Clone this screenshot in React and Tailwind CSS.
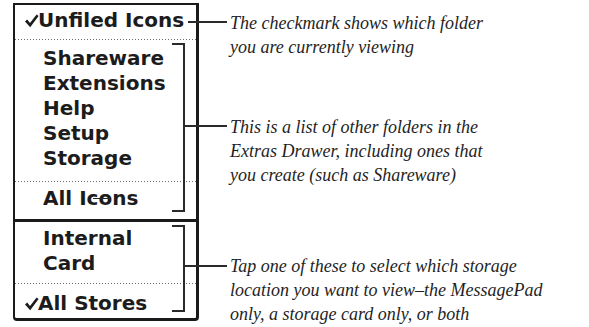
import React from "react";

const menuFont = { fontFamily: '"DejaVu Sans", "Noto Sans", sans-serif' };
const capFont = { fontFamily: '"Liberation Serif", "Times New Roman", serif' };

function Check() {
  return (
    <svg width="14" height="14" viewBox="0 0 14 14" className="shrink-0">
      <polygon points="0,7.5 2.2,5.5 5,9 11.6,0.5 13.6,2 5.2,13.2" fill="#1c1c1c" />
    </svg>
  );
}

function Dots() {
  return <div className="h-px w-full bg-[repeating-linear-gradient(to_right,#6b6b6b_0px,#6b6b6b_1px,transparent_1px,transparent_3px)]" />;
}

function Item({ children }) {
  return <div className="h-[25px] leading-[25px] pl-[28px] whitespace-nowrap">{children}</div>;
}

function CheckItem({ children }) {
  return (
    <div className="h-[25px] leading-[25px] pl-[10px] flex items-center whitespace-nowrap">
      <Check />
      <span className="ml-[-1px]">{children}</span>
    </div>
  );
}

export default function App() {
  return (
    <div className="relative w-[589px] h-[327px] bg-white overflow-hidden flex text-[#1c1c1c]">
      {/* menu */}
      <div
        className="ml-[13px] mt-[3px] w-[186px] self-start border-l-2 border-t-2 border-r-[3px] border-b-[3px] border-[#1a1a1a] rounded-b-[4px] flex flex-col text-[20px] font-bold"
        style={menuFont}
      >
        <div className="pt-[3px]">
          <CheckItem>Unfiled Icons</CheckItem>
        </div>
        <div className="mt-[6px]"><Dots /></div>
        <div className="mt-[6px] flex flex-col">
          <Item>Shareware</Item>
          <Item>Extensions</Item>
          <Item>Help</Item>
          <Item>Setup</Item>
          <Item>Storage</Item>
        </div>
        <div className="mt-[10px]"><Dots /></div>
        <div className="mt-[4px]">
          <Item>All Icons</Item>
        </div>
        <div className="mt-[8px] h-[3px] bg-[#1a1a1a]" />
        <div className="mt-[4px] flex flex-col">
          <Item>Internal</Item>
          <Item>Card</Item>
        </div>
        <div className="mt-[7px]"><Dots /></div>
        <div className="mt-[7px] pb-[2px]">
          <CheckItem>All Stores</CheckItem>
        </div>
      </div>

      {/* captions */}
      <div className="ml-[31px] pt-[11px] flex flex-col italic text-[18px] leading-[24px] text-[#1f1f1f] whitespace-nowrap" style={capFont}>
        <div>
          <div>The checkmark shows which folder</div>
          <div>you are currently viewing</div>
        </div>
        <div className="mt-[56px]">
          <div>This is a list of other folders in the</div>
          <div>Extras Drawer, including ones that</div>
          <div>you create (such as Shareware)</div>
        </div>
        <div className="mt-[67px]">
          <div>Tap one of these to select which storage</div>
          <div>location you want to view–the MessagePad</div>
          <div>only, a storage card only, or both</div>
        </div>
      </div>

      {/* callout lines over the menu */}
      <div className="absolute left-[188px] top-[21px] w-[39px] h-[2px] bg-[#2a2a2a]" />

      <div className="absolute left-[172px] top-[43px] w-[13px] h-[2px] bg-[#2a2a2a]" />
      <div className="absolute left-[183px] top-[43px] w-[2px] h-[169px] bg-[#2a2a2a]" />
      <div className="absolute left-[172px] top-[210px] w-[13px] h-[2px] bg-[#2a2a2a]" />
      <div className="absolute left-[185px] top-[125px] w-[42px] h-[2px] bg-[#2a2a2a]" />

      <div className="absolute left-[172px] top-[225px] w-[13px] h-[2px] bg-[#2a2a2a]" />
      <div className="absolute left-[183px] top-[225px] w-[2px] h-[87px] bg-[#2a2a2a]" />
      <div className="absolute left-[172px] top-[310px] w-[13px] h-[2px] bg-[#2a2a2a]" />
      <div className="absolute left-[185px] top-[265px] w-[42px] h-[2px] bg-[#2a2a2a]" />

      {/* stray stroke across "co" in All Icons */}
      <div className="absolute left-[93px] top-[198px] w-[17px] h-px bg-[#2a2a2a]" />
    </div>
  );
}
